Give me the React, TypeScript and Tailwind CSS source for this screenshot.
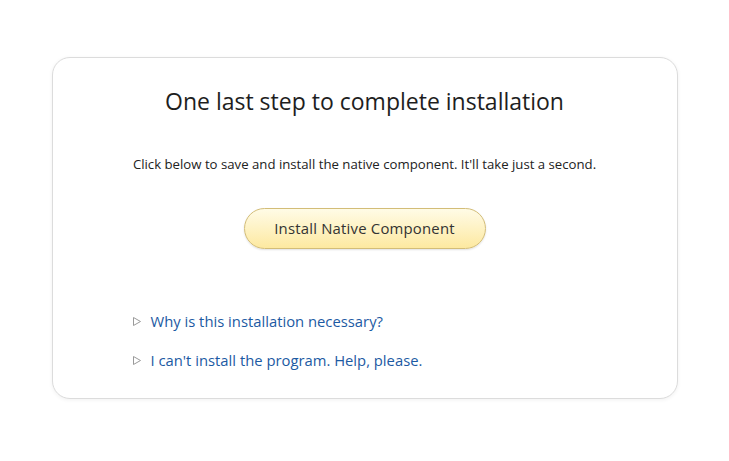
export default function App() {
  const links = ["Why is this installation necessary?", "I can't install the program. Help, please."];

  return (
    <div className="min-h-screen bg-white pt-[57px]" style={{ fontFamily: '"Open Sans", "Noto Sans", sans-serif' }}>
      <div className="mx-auto w-[626px] h-[342px] rounded-[18px] border border-[#dcdcdc] bg-white shadow-[0_1px_4px_rgba(0,0,0,0.06)] flex flex-col items-center">
        <h1 className="mt-[27px] text-[23px] leading-[32px] text-[#1e1e1e]">One last step to complete installation</h1>

        <p className="mt-[38px] text-[13.2px] leading-[18px] text-[#222]">
          Click below to save and install the native component. It'll take just a second.
        </p>

        <button className="mt-[35px] w-[242px] h-[41px] rounded-full border border-[#d3bd78] bg-gradient-to-b from-[#fffbe6] to-[#fde9a0] text-[14.9px] text-[#333] tracking-[0.2px] shadow-[0_1px_2px_rgba(0,0,0,0.12)]">
          Install Native Component
        </button>

        <div className="self-stretch pl-[80px] mt-[61px] flex flex-col gap-[17px]">
          {links.map((l) => (
            <div key={l} className="flex items-center h-[22px]">
              <svg width="8" height="9" viewBox="0 0 8 9" className="mr-[10px]">
                <path d="M0.5 0.5 L7.5 4.5 L0.5 8.5 Z" fill="none" stroke="#9a9a9a" strokeWidth="1" />
              </svg>
              <a className="text-[14.8px] text-[#1c5aa3] leading-[22px]" href="#">{l}</a>
            </div>
          ))}
        </div>
      </div>
    </div>
  );
}
